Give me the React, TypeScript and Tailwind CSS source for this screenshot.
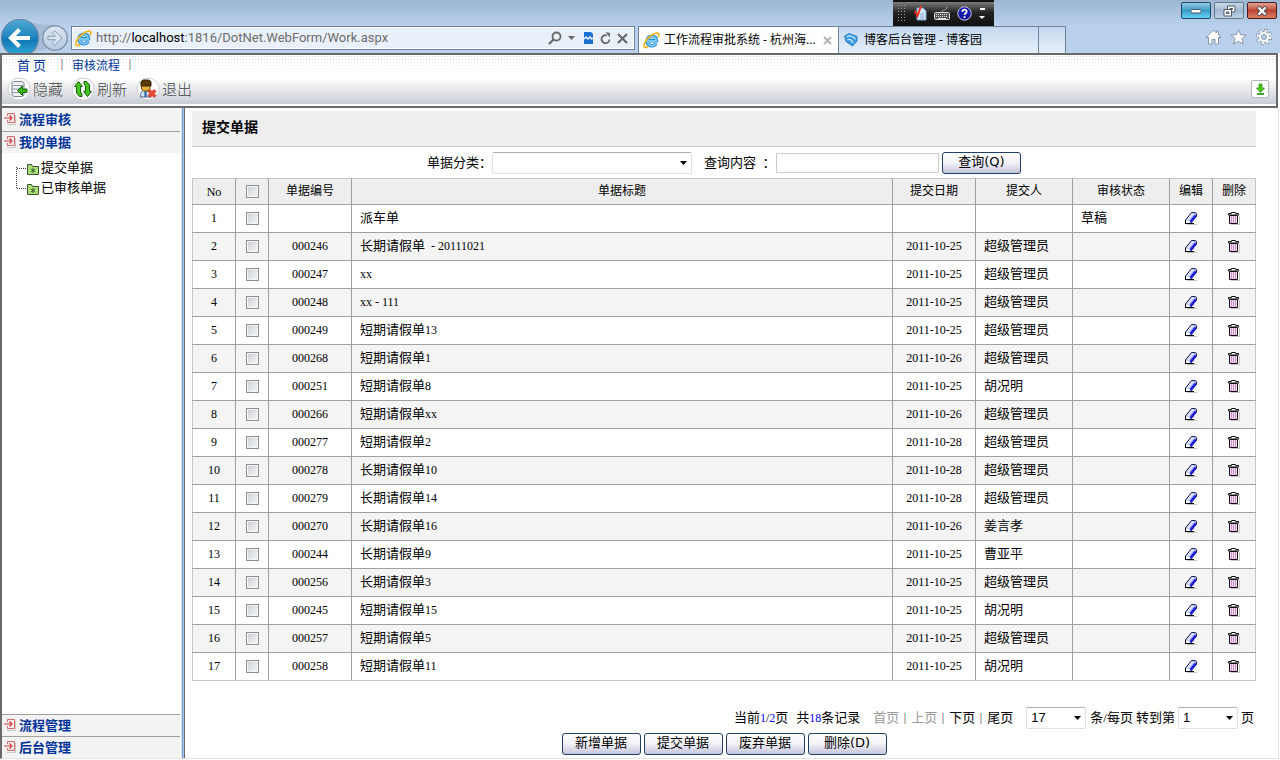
import React, { useState } from "react";

type Row = {
  code: string;
  title: string;
  suffix?: string;
  date: string;
  user: string;
  status?: string;
};

const rows: Row[] = [
  { code: "", title: "派车单", date: "", user: "", status: "草稿" },
  { code: "000246", title: "长期请假单", suffix: "\u00a0 - 20111021", date: "2011-10-25", user: "超级管理员" },
  { code: "000247", title: "", suffix: "xx", date: "2011-10-25", user: "超级管理员" },
  { code: "000248", title: "", suffix: "xx - 111", date: "2011-10-25", user: "超级管理员" },
  { code: "000249", title: "短期请假单", suffix: "13", date: "2011-10-25", user: "超级管理员" },
  { code: "000268", title: "短期请假单", suffix: "1", date: "2011-10-26", user: "超级管理员" },
  { code: "000251", title: "短期请假单", suffix: "8", date: "2011-10-25", user: "胡况明" },
  { code: "000266", title: "短期请假单", suffix: "xx", date: "2011-10-26", user: "超级管理员" },
  { code: "000277", title: "短期请假单", suffix: "2", date: "2011-10-28", user: "超级管理员" },
  { code: "000278", title: "长期请假单", suffix: "10", date: "2011-10-28", user: "超级管理员" },
  { code: "000279", title: "长期请假单", suffix: "14", date: "2011-10-28", user: "超级管理员" },
  { code: "000270", title: "长期请假单", suffix: "16", date: "2011-10-26", user: "姜言孝" },
  { code: "000244", title: "长期请假单", suffix: "9", date: "2011-10-25", user: "曹亚平" },
  { code: "000256", title: "长期请假单", suffix: "3", date: "2011-10-25", user: "超级管理员" },
  { code: "000245", title: "短期请假单", suffix: "15", date: "2011-10-25", user: "胡况明" },
  { code: "000257", title: "短期请假单", suffix: "5", date: "2011-10-25", user: "超级管理员" },
  { code: "000258", title: "短期请假单", suffix: "11", date: "2011-10-25", user: "胡况明" },
];

const IeIcon = () => (
  <svg width="17" height="17" viewBox="0 0 17 17" className="shrink-0">
    <path
      d="M13 11.200c-.8 1.600-2.200 2.500-4.100 2.500-2.700 0-4.700-2-4.700-4.700s2-4.800 4.700-4.800c2.700 0 4.400 1.800 4.400 4.600H5"
      fill="none"
      stroke="#2a86cf"
      strokeWidth="3.600"
    />
    <path
      d="M12.900 11.400c-.8 1.500-2.200 2.300-4 2.300-2.600 0-4.500-1.900-4.500-4.600s1.900-4.700 4.500-4.700c2.600 0 4.200 1.700 4.200 4.500H5"
      fill="none"
      stroke="#74c8f2"
      strokeWidth="2"
    />
    <path
      d="M5 14.500C2.500 16.200.8 16 1 13.500c.2-3 3.500-7.500 7.200-10C11.400 1.200 15 .4 15.700 2c.4.900.2 2-.5 3.200"
      fill="none"
      stroke="#f0b41a"
      strokeWidth="1.600"
    />
  </svg>
);

const NavArrows = () => (
  <svg width="71" height="34" viewBox="0 0 71 34">
    <defs>
      <linearGradient id="back" x1="0" y1="0" x2="0" y2="1">
        <stop offset="0" stopColor="#4fa9d6" />
        <stop offset="0.45" stopColor="#2288c0" />
        <stop offset="0.55" stopColor="#0f78b4" />
        <stop offset="1" stopColor="#35aede" />
      </linearGradient>
      <linearGradient id="fwd" x1="0" y1="0" x2="0" y2="1">
        <stop offset="0" stopColor="#dbe6f2" />
        <stop offset="1" stopColor="#b4c9e0" />
      </linearGradient>
    </defs>
    <path d="M22 0c8 3 16 6 32 6l-8 24-16 4z" fill="#a3bbd5" />
    <circle cx="20" cy="19" r="18.500" fill="url(#back)" stroke="#6585a5" strokeWidth="1.200" />
    <path d="M30 19H12M19.500 10.500L11 19l8.500 8.500" fill="none" stroke="#fff" strokeWidth="4" />
    <circle cx="55" cy="19" r="12.300" fill="url(#fwd)" stroke="#8293a8" strokeWidth="1.400" />
    <path
      d="M48 17.300h7.500l-3.200-3.200 2.400-2.300 7.300 7.200-7.300 7.200-2.400-2.300 3.200-3.200H48z"
      fill="#dce6f1"
      stroke="#8a9bb1"
    />
  </svg>
);

const EnterIcon = () => (
  <svg width="12" height="14" viewBox="0 0 12 14" className="shrink-0">
    <path d="M3 12.500h8.500V3" fill="none" stroke="#c9c9c9" />
    <path d="M3.500 4V1.500h7v9h-7V8" fill="#fbeaea" stroke="#d96a6a" />
    <path d="M0 6h7M5.500 3.500L8 6 5.500 8.500" fill="none" stroke="#cf3d3d" strokeWidth="1.200" />
  </svg>
);

const TreeIcon = ({ last }: { last?: boolean }) => (
  <svg width="24" height="20" viewBox="0 0 24 20" className="shrink-0">
    <path d={last ? "M1.500 0v12" : "M1.500 10v10"} stroke="#333" strokeDasharray="1 1" />
    <path d="M2 11.500h9" stroke="#333" strokeDasharray="1 1" />
    <path d="M12.500 17.500v-10h4l1 2h6v8z" fill="#a9e07a" stroke="#3d4f2c" />
    <path d="M18 11v5M15.800 12l4.400 3M20.200 12l-4.400 3" stroke="#2f4a1e" strokeWidth="0.800" />
  </svg>
);

const EditIcon = () => (
  <svg width="14" height="14" viewBox="0 0 14 14">
    <path d="M3 13.500h10" stroke="#bdbdbd" />
    <path d="M1.500 9L7.500 1.500h4l1 1V5l-6 7.500h-5z" fill="#aab6f8" stroke="#1c1c50" />
    <path d="M2.500 9L8 2.200h2.500L5 9z" fill="#dfe4ff" />
    <path d="M6.500 11l5.300-6.500" stroke="#1b1be0" strokeWidth="2.400" />
    <path d="M2 9.500h3l1 1.500-.5 1H2z" fill="#fff" />
    <path d="M1.500 9v3.500H10" fill="none" stroke="#000" />
  </svg>
);

const TrashIcon = () => (
  <svg width="13" height="14" viewBox="0 0 13 14">
    <path d="M3 13.500h8.500V5" fill="none" stroke="#c4c4c4" />
    <path d="M.5 4V2.500h3v-1h4v1h3V4z" fill="#fff" stroke="#111" />
    <path d="M1.500 4.500h8v8h-8z" fill="#f3dbf1" stroke="#111" />
    <path d="M3.500 5v7M5.500 5v7M7.500 5v7" stroke="#cf93c9" />
  </svg>
);

const HideIcon = () => (
  <svg width="24" height="24" viewBox="0 0 24 24" className="shrink-0">
    <circle cx="12" cy="12" r="11" fill="#fcfcfc" stroke="#cfcfcf" />
    <path d="M5 6l2-1.500h8L17 6v12l-2 1.500H7L5 18z" fill="#eef2f6" stroke="#7d8892" />
    <path d="M5 8.500h11M5 12h11M5 15.500h11" stroke="#8f9aa4" />
    <path d="M10.500 13.500l5-4.500v3H20v3.500h-4.500v3z" fill="#38b510" stroke="#16650a" />
  </svg>
);

const RefreshIcon = () => (
  <svg width="24" height="24" viewBox="0 0 24 24" className="shrink-0">
    <circle cx="12" cy="12" r="11" fill="#fcfcfc" stroke="#cfcfcf" />
    <path d="M7.500 4.500L3.500 9.500h2V16l3 3.500h2.500V17l-1.500-2V9.500h2z" fill="#46c31c" stroke="#155c0c" />
    <path d="M16.500 19.500l4-5h-2V8l-3-3.500H13V7l1.500 2v5.500h-2z" fill="#46c31c" stroke="#155c0c" />
  </svg>
);

const ExitIcon = () => (
  <svg width="24" height="24" viewBox="0 0 24 24" className="shrink-0">
    <circle cx="12" cy="12" r="11" fill="#fcfcfc" stroke="#cfcfcf" />
    <path d="M4.500 20c0-5 1-7 5.500-7s5 2 5 7z" fill="#cfe2f4" stroke="#4a6b92" />
    <path d="M9.500 13v7" stroke="#2358a8" strokeWidth="2" />
    <path d="M5.500 8h8.500v4l-2 2H7.500l-2-2z" fill="#e3b13c" stroke="#7a5310" />
    <path d="M5 9V5l2-2h6l2 2v4z" fill="#5b3a06" stroke="#3b2503" />
    <path d="M14 12.500l2 2 2-2 2 2-2 2 2 2-2 2-2-2-2 2-2-2 2-2-2-2z" fill="#ee4a32" stroke="#b01e10" strokeWidth="0.700" />
  </svg>
);

const Divider = () => (
  <span className="h-[11px] w-[2px] shrink-0 border-r border-l border-r-[#8fd0f0] border-l-[#f7b48f]" />
);

const Caret = () => (
  <svg width="7" height="4" viewBox="0 0 7 4" className="pointer-events-none absolute top-[9px] right-[5px]">
    <path d="M0 0h7L3.500 4z" fill="#000" />
  </svg>
);

const selectClass =
  "block h-[22px] w-full appearance-none rounded-[2px] border border-[#dfdfea] border-t-[#abadb3] bg-white pl-1 font-['Liberation_Sans'] text-[13px] leading-[18px] text-black outline-none";

const checkClass =
  "block mx-auto size-[13px] appearance-none border border-[#8e8f8f] bg-linear-to-br from-[#c9ced6] to-[#f8f8f8] shadow-[inset_0_0_0_1px_#f4f4f4] checked:bg-[#4b6fa8]";

function ActionButton({ children }: { children: React.ReactNode }) {
  return (
    <button
      type="button"
      className="h-[22px] w-[79px] rounded-[3px] border border-[#1f3f66] bg-linear-to-b from-white via-[#f1f1f7] to-[#c5c5dc] pb-[2px] font-['DejaVu_Sans','Noto_Sans_CJK_SC',sans-serif] text-[13px] leading-[18px] text-black"
    >
      {children}
    </button>
  );
}

function BrowserBar() {
  return (
    <header className="bg-linear-to-b from-[#9db7d3] to-[#b9d1ec] to-50%">
      {/* title row */}
      <div className="flex h-[26px] items-start justify-end pr-[3px]">
        <div className="mr-[187px] flex h-[26px] w-[101px] items-center gap-[7px] border-t-2 border-[#111] bg-linear-to-b from-[#7c7c7c] via-[#222] via-45% to-[#111] px-1 pb-[2px]">
          <span className="h-[18px] w-[9px] bg-[radial-gradient(#999_1px,transparent_1px)] bg-size-[3px_3px]" />
          <svg width="14" height="16" viewBox="0 0 14 16">
            <path d="M4 3h6l3 3v9H4z" fill="#d4e6fa" stroke="#7ea5d6" />
            <path d="M7 9h4M7 11h4M7 13h4" stroke="#86a9d6" />
            <path d="M2 6l2.500 5L8 1" fill="none" stroke="#f0301c" strokeWidth="2" />
          </svg>
          <svg width="16" height="15" viewBox="0 0 16 15">
            <path d="M8 6c0-3 5-1 5-5" fill="none" stroke="#aaa" />
            <rect x="0.500" y="6.500" width="15" height="7" rx="1" fill="#555" stroke="#ddd" />
            <path d="M2 8.500h12M2 10.500h12" stroke="#ddd" strokeDasharray="1 1" />
            <path d="M4 12.500h8" stroke="#ddd" />
          </svg>
          <svg width="15" height="15" viewBox="0 0 15 15">
            <circle cx="7.500" cy="7.500" r="6.700" fill="#1418a8" stroke="#c8c8dc" />
            <path d="M5.300 6c0-3.200 4.600-3 4.400-.4C9.600 7.300 7.500 7.200 7.500 9M7.500 10.300v1.700" fill="none" stroke="#fff" strokeWidth="1.700" />
          </svg>
          <svg width="6" height="14" viewBox="0 0 6 14">
            <path d="M1 3h5" stroke="#fff" strokeWidth="2" />
            <path d="M0 10h6l-3 3z" fill="#fff" />
          </svg>
        </div>
        <div className="flex gap-[3px] pt-[2px]">
          <button type="button" aria-label="最小化" className="flex h-[17px] w-[30px] items-center justify-center rounded-[2px] border border-[#1f4765] bg-linear-to-b from-[#8fcbe6] via-[#3b9cc6] to-[#5fd3f3]">
            <svg width="12" height="6" viewBox="0 0 12 6">
              <rect x="1" y="1.500" width="10" height="3.500" rx="0.500" fill="#fff" stroke="#4c5a66" />
            </svg>
          </button>
          <button type="button" aria-label="还原" className="flex h-[17px] w-[30px] items-center justify-center rounded-[2px] border border-[#67798d] bg-linear-to-b from-[#c9d8e9] via-[#a3b9d1] to-[#bdd2e6]">
            <svg width="13" height="12" viewBox="0 0 13 12">
              <path d="M4.500 1h7.500v6H4.500z" fill="#fff" stroke="#4c5a66" />
              <path d="M7 3.500h2.500v1H7z" fill="#9bb" stroke="#4c5a66" />
              <path d="M1 4.500h7.500V11H1z" fill="#fff" stroke="#4c5a66" />
              <path d="M3.500 7H6v1.500H3.500z" fill="#9bb" stroke="#4c5a66" />
            </svg>
          </button>
          <button type="button" aria-label="关闭" className="flex h-[17px] w-[30px] items-center justify-center rounded-[2px] border border-[#4e1b1b] bg-linear-to-b from-[#e2a394] via-[#bb4431] to-[#d98067]">
            <svg width="12" height="10" viewBox="0 0 12 10">
              <path d="M2 1l8 8M10 1L2 9" stroke="#4a4a55" strokeWidth="4" />
              <path d="M2.500 1.500l7 7M9.500 1.500l-7 7" stroke="#fff" strokeWidth="2.300" />
            </svg>
          </button>
        </div>
      </div>

      {/* address row */}
      <div className="flex h-[27px] items-start">
        <div className="-mt-[7px] h-[34px] w-[71px] shrink-0">
          <NavArrows />
        </div>
        <div className="flex h-[24px] w-[564px] items-center border border-[#6f8297] bg-[#e9f0f9] pr-[6px] pl-[3px] shadow-[inset_0_0_0_1px_#fff]">
          <IeIcon />
          <div className="ml-1 flex-1 font-['Roboto','Open_Sans',sans-serif] text-[13px] leading-[20px] text-[#6d6d6d]">
            http://<span className="text-black">localhost</span>:1816/DotNet.WebForm/Work.aspx
          </div>
          <div className="flex items-center gap-[6px]">
            <svg width="14" height="14" viewBox="0 0 14 14">
              <circle cx="8.500" cy="5.500" r="4" fill="none" stroke="#666" strokeWidth="1.800" />
              <path d="M5.500 8.500L1 13" stroke="#666" strokeWidth="2.200" />
            </svg>
            <svg width="7" height="4" viewBox="0 0 7 4">
              <path d="M0 0h7L3.500 4z" fill="#666" />
            </svg>
            <svg width="13" height="12" viewBox="0 0 13 12">
              <path d="M3 0h7l2 2v10H3z" fill="#1b6fd0" />
              <path d="M3 7l2-2 2 2 2-2 1.500 2L12 6" fill="none" stroke="#e9f0f9" strokeWidth="1.500" />
            </svg>
            <svg width="11" height="13" viewBox="0 0 11 13">
              <path d="M9.500 7.500A4 4 0 1 1 7 3.500" fill="none" stroke="#666" strokeWidth="1.800" />
              <path d="M5.500 0l4.500 1v4.500z" fill="#666" />
            </svg>
            <svg width="11" height="11" viewBox="0 0 11 11">
              <path d="M1 1l9 9M10 1l-9 9" stroke="#666" strokeWidth="2" />
            </svg>
          </div>
        </div>
        <div className="ml-[3px] flex h-[27px] border border-r-0 border-b-0 border-[#6f8297] font-['Open_Sans','Noto_Sans_CJK_SC',sans-serif] text-[12px] leading-[26px] text-black">
          <div className="flex w-[200px] items-center gap-1 border-r border-[#6f8297] bg-linear-to-b from-white to-[#fbfcfe] pl-1">
            <IeIcon />
            <span className="w-[155px] whitespace-nowrap">工作流程审批系统 - 杭州海...</span>
            <svg width="9" height="9" viewBox="0 0 9 9">
              <path d="M1 1l7 7M8 1L1 8" stroke="#b3b3b3" strokeWidth="2" />
            </svg>
          </div>
          <div className="flex w-[200px] items-center gap-1 border-r border-[#6f8297] bg-linear-to-b from-[#c3d8ef] to-[#e6eff9] pl-1">
            <svg width="17" height="16" viewBox="0 0 17 16">
              <path d="M1.500 4l5-2.500L14 4.500V9l-4.500 5L3 9.500z" fill="#3a9be0" stroke="#2a7fc4" />
              <path d="M3.500 5c3-2 7-1 9 2.500M4.500 8c2-1.500 4-.5 5.500 3" fill="none" stroke="#c7e8ff" strokeWidth="1.300" />
            </svg>
            <span>博客后台管理 - 博客园</span>
          </div>
          <div className="w-[27px] border-r border-[#6f8297] bg-linear-to-b from-[#c3d8ef] to-[#e6eff9]" />
        </div>
        <div className="ml-auto flex gap-2 pt-[2px] pr-[7px]">
          <svg width="17" height="18" viewBox="0 0 17 18">
            <path d="M8.500 2L1 9.500h2.500V16h3.500v-4.500h3V16h3.500V9.500H16L13.500 7V3h-2v2z" fill="#fff" stroke="#8795a6" />
          </svg>
          <svg width="17" height="18" viewBox="0 0 17 18">
            <path d="M8.500 1.500l2.100 5.200 5.600.4-4.300 3.600 1.400 5.500-4.800-3-4.800 3 1.400-5.500L.8 7.100l5.600-.4z" fill="#fff" stroke="#8795a6" />
          </svg>
          <svg width="18" height="18" viewBox="0 0 18 18">
            <circle cx="9" cy="9" r="6.600" fill="none" stroke="#8795a6" strokeWidth="3.400" strokeDasharray="2.800 2.380" />
            <circle cx="9" cy="9" r="5.500" fill="#fff" stroke="#8795a6" />
            <circle cx="9" cy="9" r="6" fill="none" stroke="#fff" strokeWidth="2.800" strokeDasharray="1.800 2.910" />
            <circle cx="9" cy="9" r="2.500" fill="#b9d1ec" stroke="#8795a6" />
          </svg>
        </div>
      </div>
    </header>
  );
}

function Toolbar() {
  return (
    <nav className="mr-[2px] flex h-[55px] flex-col border-2 border-[#696969] bg-linear-to-b from-white from-45% via-[#dadde2] via-80% to-[#c3c9d1] shadow-[inset_0_-2px_0_#fff]">
      <div className="h-[21px] bg-[radial-gradient(#b4c3da_1px,transparent_1px)] bg-size-[3px_3px] font-['Noto_Sans_CJK_SC',sans-serif] text-[12px] leading-[18px] text-[#003399]">
        <div className="flex h-full items-center bg-linear-to-b from-[#ffffff33] to-white to-80% pb-[2px] pl-[15px]">
          <a href="#home" className="mr-[15px] text-[13px]">首 页</a>
          <Divider />
          <a href="#flow" className="mr-[9px] ml-[9px]">审核流程</a>
          <Divider />
        </div>
      </div>
      <div className="flex flex-1 items-center pr-[7px] pb-1 pl-[5px] font-['Noto_Sans_CJK_SC',sans-serif] text-[15px] leading-[20px] font-light text-[#444]">
        <a href="#hide" className="flex w-16 items-center gap-[2px]">
          <HideIcon />
          隐藏
        </a>
        <a href="#refresh" className="flex w-[65px] items-center gap-[2px]">
          <RefreshIcon />
          刷新
        </a>
        <a href="#exit" className="flex items-center gap-[2px]">
          <ExitIcon />
          退出
        </a>
        <button type="button" aria-label="展开" className="ml-auto flex size-[18px] items-center justify-center rounded-[2px] border border-[#b3b8be] bg-white">
          <svg width="9" height="12" viewBox="0 0 9 12">
            <path d="M3 1h3v4h2.500l-4 4.500L.5 5H3z" fill="#4cc71c" stroke="#1e8a0c" strokeWidth="0.700" />
            <path d="M1 11h7" stroke="#1e8a0c" strokeWidth="1.600" />
          </svg>
        </button>
      </div>
    </nav>
  );
}

function MenuHeading({ children, line }: { children: React.ReactNode; line?: boolean }) {
  return (
    <button
      type="button"
      className={
        "flex h-[22px] w-full items-center gap-[3px] bg-[#f3f3f3] pb-[2px] pl-[2px] font-bold text-[#003399]" +
        (line ? " border-t border-[#a0a0a0]" : "")
      }
    >
      <EnterIcon />
      {children}
    </button>
  );
}

function Sidebar() {
  return (
    <aside className="flex w-[180px] shrink-0 flex-col border-r border-[#e3e3e3] pr-px font-['Noto_Sans_CJK_SC',sans-serif] text-[13px] leading-[20px]">
      <div className="bg-[#f3f3f3] pt-px">
        <MenuHeading>流程审核</MenuHeading>
      </div>
      <MenuHeading line>我的单据</MenuHeading>
      <ul className="flex-1 pt-1 pl-[13px]">
        <li className="flex h-5 items-center gap-[2px]">
          <TreeIcon />
          <a href="#submit">提交单据</a>
        </li>
        <li className="flex h-5 items-center gap-[2px]">
          <TreeIcon last />
          <a href="#audited">已审核单据</a>
        </li>
      </ul>
      <MenuHeading line>流程管理</MenuHeading>
      <MenuHeading line>后台管理</MenuHeading>
    </aside>
  );
}

function App() {
  const [checked, setChecked] = useState<number[]>([]);

  const toggle = (i: number) => {
    setChecked(checked.includes(i) ? checked.filter((c) => c !== i) : [...checked, i]);
  };

  const toggleAll = () => {
    setChecked(checked.length === rows.length ? [] : rows.map((_, i) => i));
  };

  return (
    <div className="flex min-h-screen flex-col bg-white pb-px text-black">
      <BrowserBar />
      <Toolbar />
      <div className="mr-px flex flex-1 border-r border-b border-l-2 border-[#e3e3e3] border-l-[#696969]">
        <Sidebar />
        <div className="w-[3px] shrink-0 border-r border-l border-l-[#6da0d6] border-r-[#696969] bg-[#a9c6e6]" />

        <main className="flex min-w-0 flex-1 flex-col pt-[3px] pr-[22px] pb-[3px] pl-[7px] font-['Liberation_Serif','Noto_Sans_CJK_SC',serif] text-[13px] leading-[20px]">
          <h1 className="h-9 border-b border-[#c8c8c8] bg-[#eeeeee] pl-[10px] text-[14px] leading-[34px] font-bold">提交单据</h1>

          <form className="flex h-[31px] items-center justify-center">
            <label htmlFor="category">单据分类：</label>
            <div className="relative mr-3 w-[200px]">
              <select id="category" className={selectClass}>
                <option></option>
              </select>
              <Caret />
            </div>
            <label htmlFor="keyword" className="w-[72px] whitespace-pre">查询内容  ：</label>
            <input id="keyword" type="text" className="mr-[3px] h-5 w-[163px] border border-[#cccccc] px-1 outline-none" />
            <ActionButton>查询(Q)</ActionButton>
          </form>

          <table className="w-full table-fixed border-collapse border border-[#c8c8c8] text-[12px]">
            <colgroup>
              <col className="w-[43px]" />
              <col className="w-[33px]" />
              <col className="w-[83px]" />
              <col />
              <col className="w-[83px]" />
              <col className="w-[97px]" />
              <col className="w-[97px]" />
              <col className="w-[43px]" />
              <col className="w-[43px]" />
            </colgroup>
            <thead>
              <tr className="h-[26px] bg-[#eeeeee] *:border-r *:border-b *:border-[#a0a0a0] *:font-normal *:last:border-r-[#c8c8c8]">
                <th className="p-0">No</th>
                <th className="p-0">
                  <input type="checkbox" aria-label="全选" className={checkClass} checked={checked.length === rows.length} onChange={toggleAll} />
                </th>
                <th className="p-0 pb-[2px]">单据编号</th>
                <th className="p-0 pb-[2px]">单据标题</th>
                <th className="p-0 pb-[2px]">提交日期</th>
                <th className="p-0 pb-[2px]">提交人</th>
                <th className="p-0 pb-[2px]">审核状态</th>
                <th className="p-0 pb-[2px]">编辑</th>
                <th className="p-0 pb-[2px]">删除</th>
              </tr>
            </thead>
            <tbody>
              {rows.map((row, i) => (
                <tr
                  key={i}
                  className="h-7 text-center *:border-r *:border-b *:border-[#a0a0a0] *:last:border-r-[#c8c8c8] even:bg-[#f4f4f4] *:[tr:last-child>&]:border-b-[#c8c8c8]"
                >
                  <td className="p-0 pb-[2px]">{i + 1}</td>
                  <td className="p-0">
                    <input type="checkbox" aria-label={"选择 " + (i + 1)} className={checkClass} checked={checked.includes(i)} onChange={() => toggle(i)} />
                  </td>
                  <td className="p-0 pb-[2px]">{row.code}</td>
                  <td className="p-0 pb-[2px] pl-2 text-left">
                    <span className="text-[13px]">{row.title}</span>
                    {row.suffix}
                  </td>
                  <td className="p-0 pb-[2px]">{row.date}</td>
                  <td className="p-0 pb-[2px] pl-2 text-left text-[13px]">{row.user}</td>
                  <td className="p-0 pb-[2px] pl-2 text-left text-[13px]">{row.status}</td>
                  <td className="p-0 pb-[2px]">
                    <a href="#edit" aria-label="编辑" className="flex justify-center">
                      <EditIcon />
                    </a>
                  </td>
                  <td className="p-0 pb-[2px]">
                    <a href="#delete" aria-label="删除" className="flex justify-center">
                      <TrashIcon />
                    </a>
                  </td>
                </tr>
              ))}
            </tbody>
          </table>

          <div className="mt-auto flex h-[26px] items-center justify-end pr-[2px]">
            <span className="mr-2">
              当前<span className="text-[12px]"><span className="text-[#0000ff]">1</span>/<span className="text-[#0000ff]">2</span></span>页
            </span>
            <span className="mr-[13px]">
              共<span className="text-[12px] text-[#0000ff]">18</span>条记录
            </span>
            <div className="mr-[13px] flex items-center gap-[5px]">
              <span className="text-[#999999]">首页</span>
              <Divider />
              <span className="text-[#999999]">上页</span>
              <Divider />
              <a href="#next">下页</a>
              <Divider />
              <a href="#last">尾页</a>
            </div>
            <div className="relative mr-1 w-[60px]">
              <select id="size" className={selectClass}>
                <option>17</option>
              </select>
              <Caret />
            </div>
            <label htmlFor="size" className="mr-[3px]">条/每页</label>
            <label htmlFor="page" className="mr-[3px]">转到第</label>
            <div className="relative mr-[3px] w-[60px]">
              <select id="page" className={selectClass}>
                <option>1</option>
              </select>
              <Caret />
            </div>
            <span>页</span>
          </div>
          <div className="mt-[2px] flex justify-center gap-[3px]">
            <ActionButton>新增单据</ActionButton>
            <ActionButton>提交单据</ActionButton>
            <ActionButton>废弃单据</ActionButton>
            <ActionButton>删除(D)</ActionButton>
          </div>
        </main>
      </div>
    </div>
  );
}

export default App;
